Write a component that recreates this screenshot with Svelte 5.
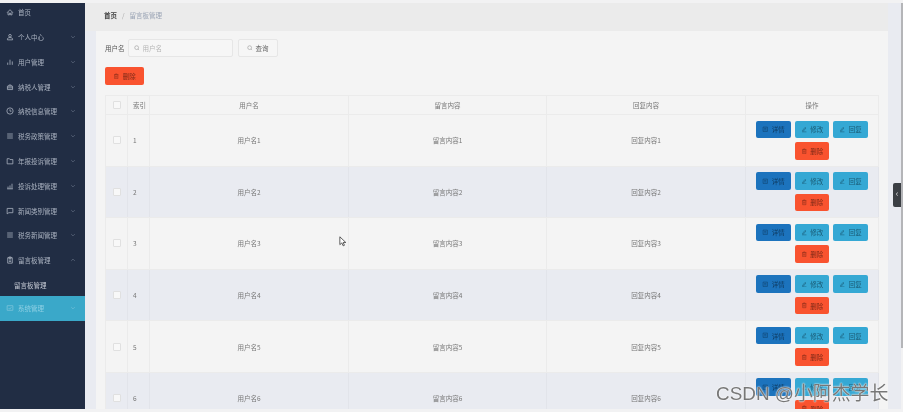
<script lang="ts">
  const menus = [
    { label: '首页', icon: 'home', arrow: '' },
    { label: '个人中心', icon: 'user', arrow: 'down' },
    { label: '用户管理', icon: 'chart', arrow: 'down' },
    { label: '纳税人管理', icon: 'case', arrow: 'down' },
    { label: '纳税信息管理', icon: 'clock', arrow: 'down' },
    { label: '税务政策管理', icon: 'list', arrow: 'down' },
    { label: '年报投诉管理', icon: 'folder', arrow: 'down' },
    { label: '投诉处理管理', icon: 'bars', arrow: 'down' },
    { label: '新闻类别管理', icon: 'msg', arrow: 'down' },
    { label: '税务新闻管理', icon: 'list', arrow: 'down' },
    { label: '留言板管理', icon: 'clip', arrow: 'up' }
  ]
  const rows = [1, 2, 3, 4, 5, 6]
  const icons: Record<string, string> = {
    home: 'M2 8l5-5 5 5M3.5 7v5h2.5V9h2v3h2.5V7',
    user: 'M7 2.5a2.3 2.3 0 1 1 0 4.6a2.3 2.3 0 1 1 0-4.6M2.5 12h9v-1.5c0-1.5-2-2.5-4.5-2.5s-4.5 1-4.5 2.5z',
    chart: 'M3 12V8M7 12V3M11 12V6',
    case: 'M2.5 5.5h9v6h-9zM5 5.5V3.5h4v2M2.5 8.5h9',
    clock: 'M7 1.5a5.5 5.5 0 1 1 0 11a5.5 5.5 0 1 1 0-11M7 4v3.3h2.6',
    list: 'M2 3.5h10M2 7h10M2 10.5h10',
    folder: 'M2 3h4l1 1.5h5V12H2z',
    bars: 'M2 12h10M3.5 12V8M7 12V6M10.5 12V3',
    msg: 'M2 2.5h10v7.5H5l-3 2z',
    clip: 'M3 3h8v9.5H3zM5 1.8h4v2.4H5zM5 7h4M5 9.5h4'
  }
</script>

<div class="page">
  <aside class="side">
    {#each menus as m}
      <div class="item">
        <svg class="ico" viewBox="0 0 14 14"><path d={icons[m.icon]} /></svg>
        <span class="name">{m.label}</span>
        {#if m.arrow}
          <svg class="arrow" viewBox="0 0 10 10"><path d={m.arrow === 'up' ? 'M2 6.5l3-3 3 3' : 'M2 3.5l3 3 3-3'} /></svg>
        {/if}
      </div>
    {/each}
    <div class="sub">留言板管理</div>
    <div class="item active">
      <svg class="ico" viewBox="0 0 14 14"><path d="M2 3h10v8H2zM4.5 7l2 2 3-3.5" /></svg>
      <span class="name">系统管理</span>
      <svg class="arrow" viewBox="0 0 10 10"><path d="M2 3.5l3 3 3-3" /></svg>
    </div>
  </aside>

  <main class="main">
    <div class="crumb">
      <b>首页</b><i>/</i><span>留言板管理</span>
    </div>
    <div class="card">
      <div class="search">
        <label for="q">用户名</label>
        <div class="input">
          <svg viewBox="0 0 12 12"><path d="M5.3 1.5a3.8 3.8 0 1 1 0 7.6a3.8 3.8 0 1 1 0-7.6M8.2 8.2l2 2" /></svg>
          <input id="q" placeholder="用户名" />
        </div>
        <button class="plain">
          <svg viewBox="0 0 12 12"><path d="M5.3 1.5a3.8 3.8 0 1 1 0 7.6a3.8 3.8 0 1 1 0-7.6M8.2 8.2l2 2" /></svg>
          查询
        </button>
      </div>
      <button class="btn del big">
        <svg viewBox="0 0 12 12"><path d="M2 3h8M4.5 3V1.8h3V3M3 3v7.5h6V3M5 5v3.5M7 5v3.5" /></svg>
        删除
      </button>

      <div class="table">
        <div class="tr head">
          <div class="td c1"><span class="check"></span></div>
          <div class="td c2">索引</div>
          <div class="td c3">用户名</div>
          <div class="td c3">留言内容</div>
          <div class="td c3">回复内容</div>
          <div class="td c4">操作</div>
        </div>
        {#each rows as r}
          <div class="tr" class:even={r % 2 === 0}>
            <div class="td c1"><span class="check"></span></div>
            <div class="td c2">{r}</div>
            <div class="td c3">用户名{r}</div>
            <div class="td c3">留言内容{r}</div>
            <div class="td c3">回复内容{r}</div>
            <div class="td c4 ops">
              <button class="btn info">
                <svg viewBox="0 0 12 12"><path d="M2 2h8v8H2zM4 4.5h4M4 7h4" /></svg>
                详情
              </button>
              <button class="btn edit">
                <svg viewBox="0 0 12 12"><path d="M3 8l4.5-5.5 1.5 1.2L4.6 9.3 3 9.5zM2 10.8h8" /></svg>
                修改
              </button>
              <button class="btn edit">
                <svg viewBox="0 0 12 12"><path d="M3 8l4.5-5.5 1.5 1.2L4.6 9.3 3 9.5zM2 10.8h8" /></svg>
                回复
              </button>
              <button class="btn del">
                <svg viewBox="0 0 12 12"><path d="M2 3h8M4.5 3V1.8h3V3M3 3v7.5h6V3M5 5v3.5M7 5v3.5" /></svg>
                删除
              </button>
            </div>
          </div>
        {/each}
      </div>
    </div>
    <div class="scroll"></div>
  </main>

  <div class="handle">‹</div>
  <div class="mark">CSDN @小阿杰学长</div>
  <svg class="cursor" viewBox="0 0 10 14"><path d="M1 1v10l2.5-2.2L5.2 12.5l1.6-.7L5.2 8.2H8.5z" /></svg>
</div>

<style>
  :global(body) {
    margin: 0;
    background: #f2f2f3;
    overflow: hidden;
  }

  .page {
    position: relative;
    display: flex;
    width: 903px;
    height: 406px;
    margin-top: 3px;
    font-family: "Noto Sans CJK SC", "Liberation Sans", sans-serif;
    font-size: 6.5px;
    color: #777;
    filter: blur(0.5px);
    overflow: hidden;
  }

  .side {
    width: 85px;
    flex: none;
    background: #212d44;
    color: #a9b1bf;
  }

  .item {
    display: flex;
    align-items: center;
    height: 24.8px;
    padding: 0 5px 0 6px;
    box-sizing: border-box;
  }

  .item:first-child {
    height: 21.6px;
    padding-bottom: 3.6px;
  }

  .ico {
    width: 8px;
    height: 8px;
    margin-right: 4px;
    fill: none;
    stroke: #a9b1bf;
    stroke-width: 1.4;
  }

  .name {
    flex: 1;
    white-space: nowrap;
  }

  .arrow {
    width: 6px;
    height: 6px;
    margin-right: 4px;
    fill: none;
    stroke: #6f7a8e;
    stroke-width: 1;
  }

  .sub {
    height: 22px;
    line-height: 22px;
    padding-left: 14px;
    color: #c3c8d2;
    margin-top: 1.4px;
  }

  .active {
    background: #3aa8c9;
    color: #8fd0e4;
    height: 25px;
  }

  .active .ico, .active .arrow {
    stroke: #7cc4da;
  }

  .main {
    position: relative;
    flex: 1;
    margin-right: 2px;
    background: #e9ebf1;
    min-width: 0;
  }

  .crumb {
    height: 28px;
    padding: 0 0 4px 19px;
    background: #ebebeb;
    display: flex;
    align-items: center;
    width: 803px;
    box-sizing: border-box;
    color: #9aa4b5;
  }

  .crumb b {
    color: #444;
  }

  .crumb i {
    margin: 0 5px;
    font-style: normal;
    color: #aaa;
  }

  .card {
    width: 792px;
    height: 378px;
    margin-left: 11px;
    padding: 8px 10px 0 9px;
    box-sizing: border-box;
    background: #f4f4f4;
    overflow: hidden;
  }

  .search {
    display: flex;
    align-items: center;
    height: 18px;
    color: #555;
  }

  .search label {
    margin-right: 3px;
  }

  .input {
    display: flex;
    align-items: center;
    width: 105px;
    height: 18px;
    margin-right: 5px;
    padding-left: 5px;
    box-sizing: border-box;
    border: 1px solid #e6e6e6;
    border-radius: 2px;
    background: #f6f6f6;
  }

  svg {
    flex: none;
  }

  .input svg, .plain svg {
    width: 6px;
    height: 6px;
    margin-right: 3px;
    fill: none;
    stroke: #888;
    stroke-width: 1;
  }

  .input input {
    width: 80px;
    border: 0;
    padding: 0;
    outline: 0;
    background: transparent;
    font: inherit;
  }

  .input input::placeholder {
    color: #b5b5b5;
  }

  .plain {
    display: flex;
    align-items: center;
    justify-content: center;
    width: 40px;
    height: 18px;
    padding: 0;
    border: 1px solid #e6e6e6;
    border-radius: 2px;
    background: #f6f6f6;
    color: #666;
    font: inherit;
  }

  .btn {
    display: inline-flex;
    align-items: center;
    justify-content: center;
    width: 34.5px;
    height: 18px;
    padding: 0;
    border: 0;
    border-radius: 2px;
    font: inherit;
    color: #444;
  }

  .btn svg {
    width: 6.5px;
    height: 6.5px;
    margin-right: 3px;
    fill: none;
    stroke: #444;
    stroke-width: 0.9;
  }

  .big {
    display: flex;
    width: 39px;
    margin: 10px 0 10px 0;
  }

  .del {
    background: #f9532f;
    color: #7d2a18;
  }

  .del svg {
    stroke: #7d2a18;
  }

  .info {
    background: #1c73bd;
    color: #0e3a60;
  }

  .info svg {
    stroke: #0e3a60;
  }

  .edit {
    background: #35a8d4;
    color: #1a5a74;
  }

  .edit svg {
    stroke: #16506a;
  }

  .table {
    width: 773px;
    border-left: 1px solid #ebebeb;
    border-top: 1px solid #ebebeb;
  }

  .tr {
    display: grid;
    grid-template-columns: 22px 22px 199px 198px 199px 133px;
    height: 51.6px;
    border-bottom: 1px solid #ebebeb;
    box-sizing: border-box;
  }

  .head {
    height: 19px;
  }

  .even {
    background: #e9ebf1;
  }

  .td {
    display: flex;
    align-items: center;
    justify-content: center;
    border-right: 1px solid #ebebeb;
    min-width: 0;
  }

  .even .td {
    border-right-color: #e2e4ea;
  }

  .c2 {
    justify-content: flex-start;
    padding-left: 5px;
  }

  .check {
    width: 6px;
    height: 6px;
    border: 1px solid #e0e0e0;
    border-radius: 1px;
    background: #f8f8f8;
  }

  .ops {
    flex-wrap: wrap;
    align-content: flex-start;
    gap: 4px 4px;
    padding-top: 5.5px;
    box-sizing: border-box;
  }

  .ops .btn {
    height: 17.5px;
  }

  .scroll {
    position: absolute;
    right: -2px;
    top: 0;
    width: 2px;
    height: 345px;
    background: #b4b5b8;
  }

  .handle {
    position: absolute;
    right: 2px;
    top: 180px;
    width: 8px;
    height: 24px;
    border-radius: 2px 0 0 2px;
    background: #3b3f44;
    color: #ddd;
    font-size: 9px;
    line-height: 22px;
    text-align: center;
  }

  .mark {
    position: absolute;
    left: 716px;
    top: 379px;
    font-family: "Liberation Sans", "Noto Sans CJK SC", sans-serif;
    font-size: 18.9px;
    line-height: 24px;
    color: #777;
    text-shadow: 0 0 2px #fff, 0 0 1px #fff;
    white-space: nowrap;
  }

  .cursor {
    position: absolute;
    left: 339px;
    top: 233px;
    width: 8px;
    height: 11px;
    fill: #fff;
    stroke: #333;
    stroke-width: 1;
  }
</style>
